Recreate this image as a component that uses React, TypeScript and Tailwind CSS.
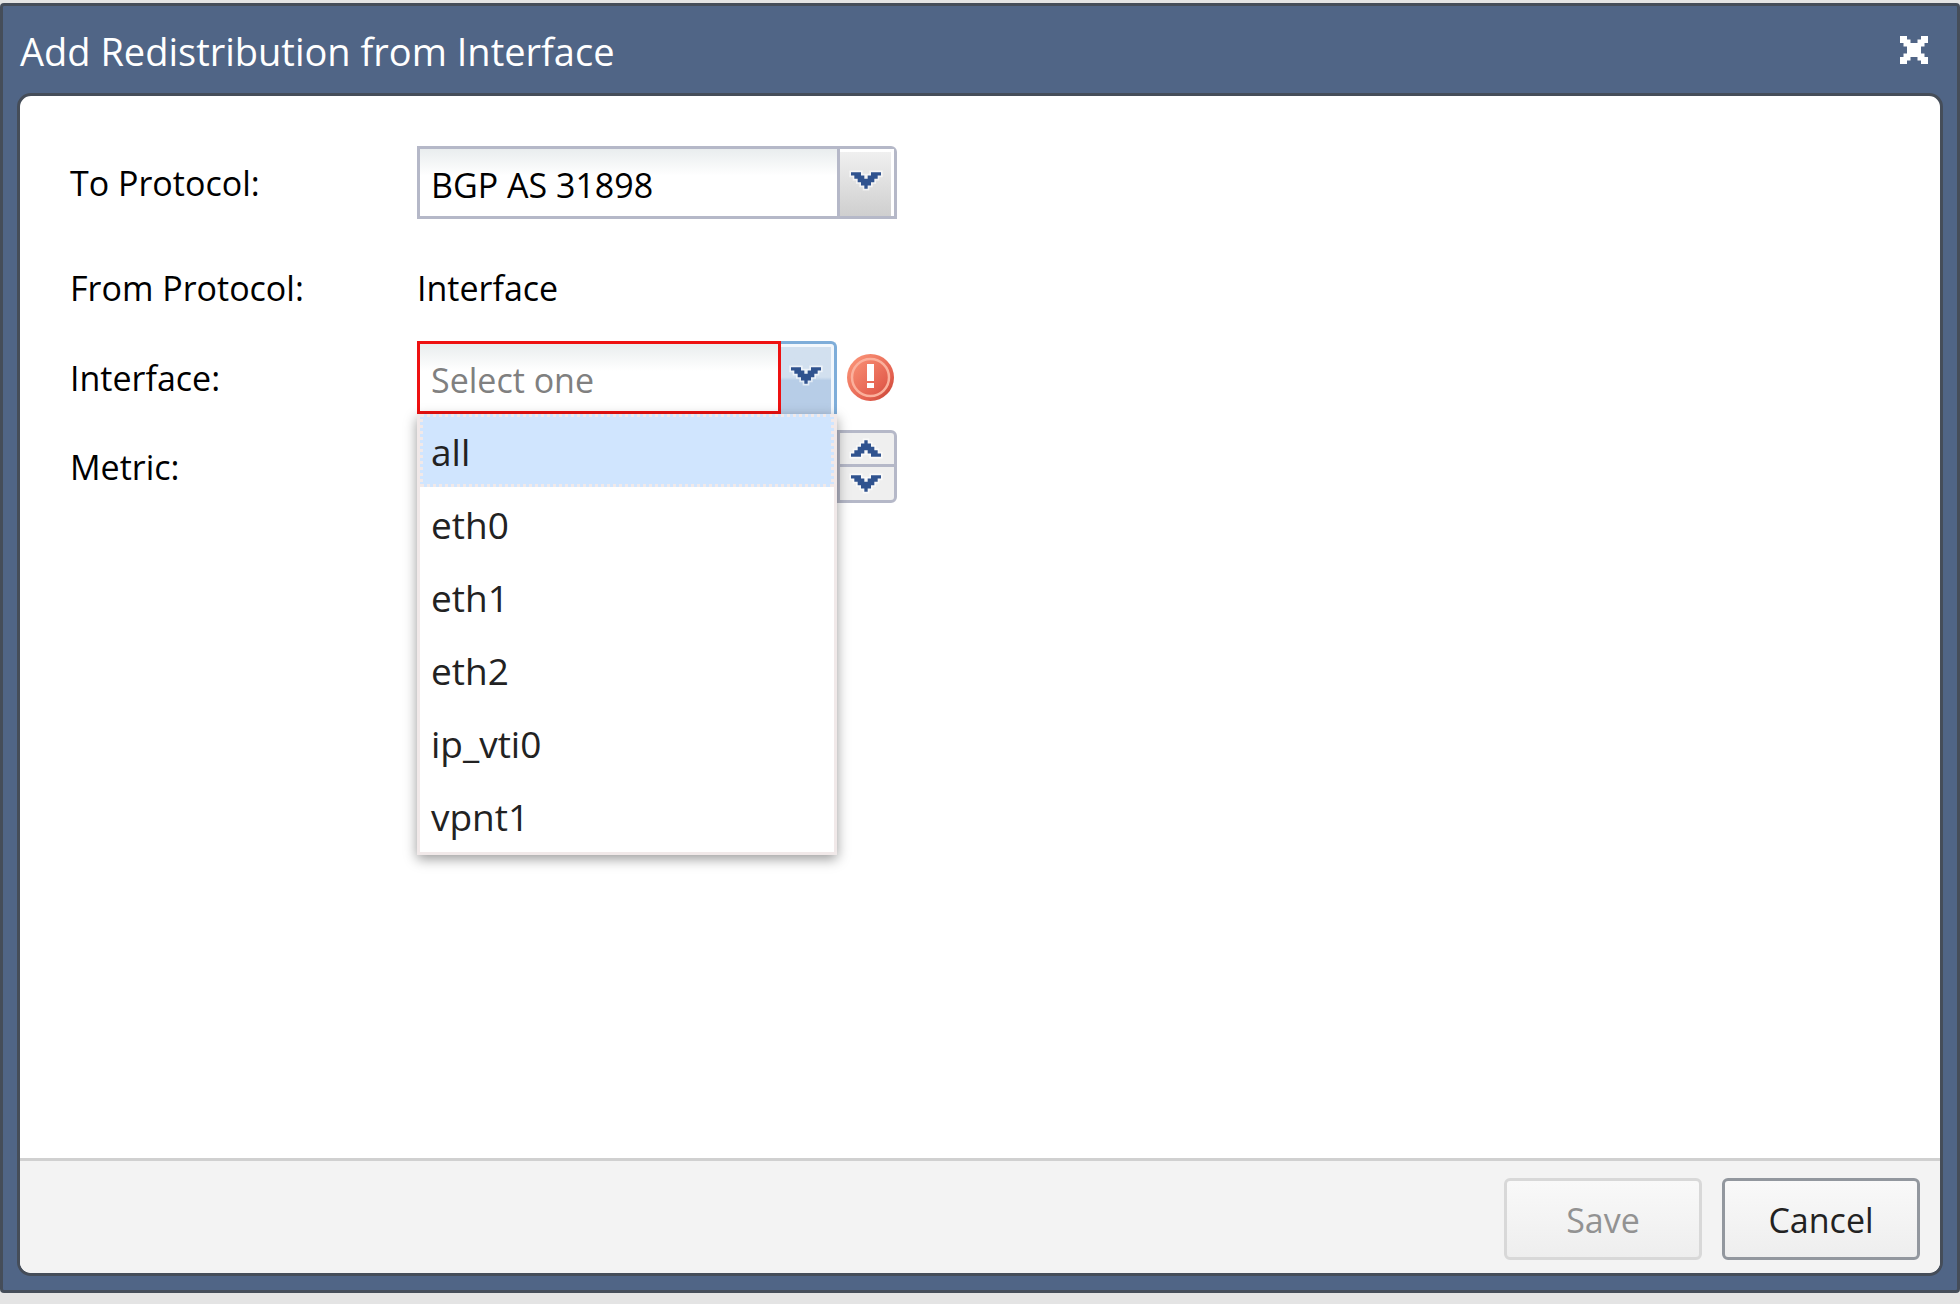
import React, { useState } from 'react';

const interfaces = ['all', 'eth0', 'eth1', 'eth2', 'ip_vti0', 'vpnt1'];

const Chevron: React.FC<{ up?: boolean }> = ({ up }) => (
    <svg viewBox="0 0 9 5" className={`w-[30px] h-[17px] shrink-0 overflow-visible ${up ? 'rotate-180' : ''}`} aria-hidden="true">
        <path
            fill="#30538f"
            stroke="#fff"
            strokeOpacity="0.6"
            strokeWidth="1"
            paintOrder="stroke"
            d="M0 0h3v1h1v1h1v-1h1v-1h3v1h-1v1h-1v1h-1v1h-1v1h-1v-1h-1v-1h-1v-1h-1v-1h-1z"
        />
    </svg>
);

const CloseIcon = () => (
    <svg viewBox="0 0 8 8" className="w-7 h-7" aria-hidden="true">
        <path fill="#fff" d="M0 0h2v1h1v1h2v-1h1v-1h2v2h-1v1h-1v2h1v1h1v2h-2v-1h-1v-1h-2v1h-1v1h-2v-2h1v-1h1v-2h-1v-1h-1z" />
    </svg>
);

const ErrorIcon = () => (
    <svg viewBox="0 0 47 47" className="w-[47px] h-[47px]" role="img" aria-label="This field is required">
        <defs>
            <linearGradient id="errorFill" x1="0" y1="0" x2="1" y2="1">
                <stop offset="0" stopColor="#fd9a7c" />
                <stop offset="0.7" stopColor="#e4604f" />
                <stop offset="1" stopColor="#c04030" />
            </linearGradient>
        </defs>
        <circle cx="23.5" cy="23.5" r="23.5" fill="url(#errorFill)" />
        <circle cx="23.5" cy="23.5" r="18.5" fill="none" stroke="#fbb09c" strokeWidth="2.5" />
        <path fill="#fff" d="M20 10h7v17h-7zM20 29h7v5h-7z" />
    </svg>
);

const App: React.FC = () => {
    const [highlighted, setHighlighted] = useState('all');
    const [value, setValue] = useState('');

    return (
        <div className="min-h-screen flex flex-col bg-[#e4e4e4] pt-[3px] pb-[11px] font-['Open_Sans',sans-serif] text-[34px] leading-[46px] text-black">
            <section role="dialog" aria-labelledby="title" className="grow flex flex-col rounded-sm border-[3px] border-[#454d59] bg-[#506586] px-3.5 pb-3.5">
                <header className="flex items-center justify-between h-[87px] pl-[3px] pr-[15px]">
                    <h1 id="title" className="pt-0.5 text-[38px] text-white">Add Redistribution from Interface</h1>
                    <button type="button" aria-label="Close"><CloseIcon /></button>
                </header>

                <form className="grow flex flex-col overflow-hidden rounded-[14px] border-[3px] border-[#454d59] bg-white">
                    <div className="grow flex flex-col px-[50px] pt-[50px]">
                        <div className="flex items-center">
                            <label htmlFor="to" className="w-[347px]">To Protocol:</label>
                            <div className="relative w-[480px]">
                                <select id="to" className="block w-full h-[73px] appearance-none rounded-tr-md border-[3px] border-[#b5b8c8] bg-linear-to-b from-[#e9edee] to-white to-40% pt-1 pl-[11px]">
                                    <option>BGP AS 31898</option>
                                </select>
                                <span className="pointer-events-none absolute inset-y-[3px] right-[3px] w-[57px] flex justify-center border-l-[3px] border-[#b5b8c8] bg-white pt-[3px] pr-[3px]">
                                    <span className="grow flex justify-center bg-linear-to-b from-[#f0f0f0] to-[#cfcfcf] pt-5">
                                        <Chevron />
                                    </span>
                                </span>
                            </div>
                        </div>

                        <div className="flex items-center h-[73px] mt-8">
                            <span className="w-[347px]">From Protocol:</span>
                            <span>Interface</span>
                        </div>

                        <div className="flex items-center mt-[17px]">
                            <label htmlFor="interface" className="w-[347px]">Interface:</label>
                            <div className="relative flex w-[420px] h-[73px]">
                                <input
                                    id="interface"
                                    role="combobox"
                                    aria-expanded="true"
                                    aria-controls="interface-list"
                                    aria-invalid="true"
                                    placeholder="Select one"
                                    value={value}
                                    onChange={e => setValue(e.target.value)}
                                    className="grow min-w-0 border-[3px] border-[#ee1111] bg-linear-to-b from-[#e9edee] to-white to-40% pt-1 pl-[11px] placeholder:text-[#808080] outline-none"
                                />
                                <button type="button" aria-label="Show interfaces" className="w-14 shrink-0 flex items-stretch rounded-tr-md border-t-[3px] border-r-[3px] border-[#7eadd9] bg-[#f2f7fc] pt-[3px] pr-[3px]">
                                    <span className="grow flex justify-center bg-linear-to-b from-[#d2e0ef] from-45% to-[#b7cde7] to-50% pt-5">
                                        <Chevron />
                                    </span>
                                </button>
                                <ul id="interface-list" role="listbox" className="absolute top-full inset-x-0 z-10 border-[3px] border-t-0 border-[#f1e9e9] bg-white text-[37px] text-[#222] shadow-[0_4px_12px_rgba(0,0,0,0.4)]">
                                    {interfaces.map(name => (
                                        <li
                                            key={name}
                                            role="option"
                                            aria-selected={name === highlighted}
                                            onMouseEnter={() => setHighlighted(name)}
                                            onClick={() => setValue(name)}
                                            className={`h-[73px] flex items-center border-[3px] border-dotted pt-0.5 pl-2 ${name === highlighted ? 'border-[#f1e9e9] bg-[#d0e5fe]' : 'border-transparent'}`}
                                        >
                                            {name}
                                        </li>
                                    ))}
                                </ul>
                            </div>
                            <span className="ml-2.5"><ErrorIcon /></span>
                        </div>

                        <div className="flex items-center mt-4">
                            <label htmlFor="metric" className="w-[347px]">Metric:</label>
                            <div className="flex w-[480px] h-[73px]">
                                <input id="metric" inputMode="numeric" className="grow min-w-0 border-[3px] border-r-0 border-[#b5b8c8] pl-[11px]" />
                                <div className="w-[60px] shrink-0 flex flex-col rounded-r-md border-[3px] border-[#b5b8c8] bg-[#efefef]">
                                    <button type="button" aria-label="Increase" className="h-[34px] flex items-center justify-center border-b-[3px] border-[#b5b8c8] pr-[3px]"><Chevron up /></button>
                                    <button type="button" aria-label="Decrease" className="grow flex items-center justify-center pr-[3px]"><Chevron /></button>
                                </div>
                            </div>
                        </div>
                    </div>

                    <footer className="flex justify-end gap-5 border-t-[3px] border-[#d0d0d0] bg-[#f3f3f3] pt-[17px] pb-[13px] pr-5">
                        <button type="submit" disabled className="w-[198px] h-[82px] rounded-md border-[3px] border-[#d8d8d8] bg-linear-to-b from-[#f9f9f9] to-[#eeeeee] pt-0.5 text-[#929292]">Save</button>
                        <button type="button" className="w-[198px] h-[82px] rounded-md border-[3px] border-[#92979e] bg-linear-to-b from-[#f9f9f9] to-[#eeeeee] pt-0.5 text-[#222]">Cancel</button>
                    </footer>
                </form>
            </section>
        </div>
    );
};

export default App;
